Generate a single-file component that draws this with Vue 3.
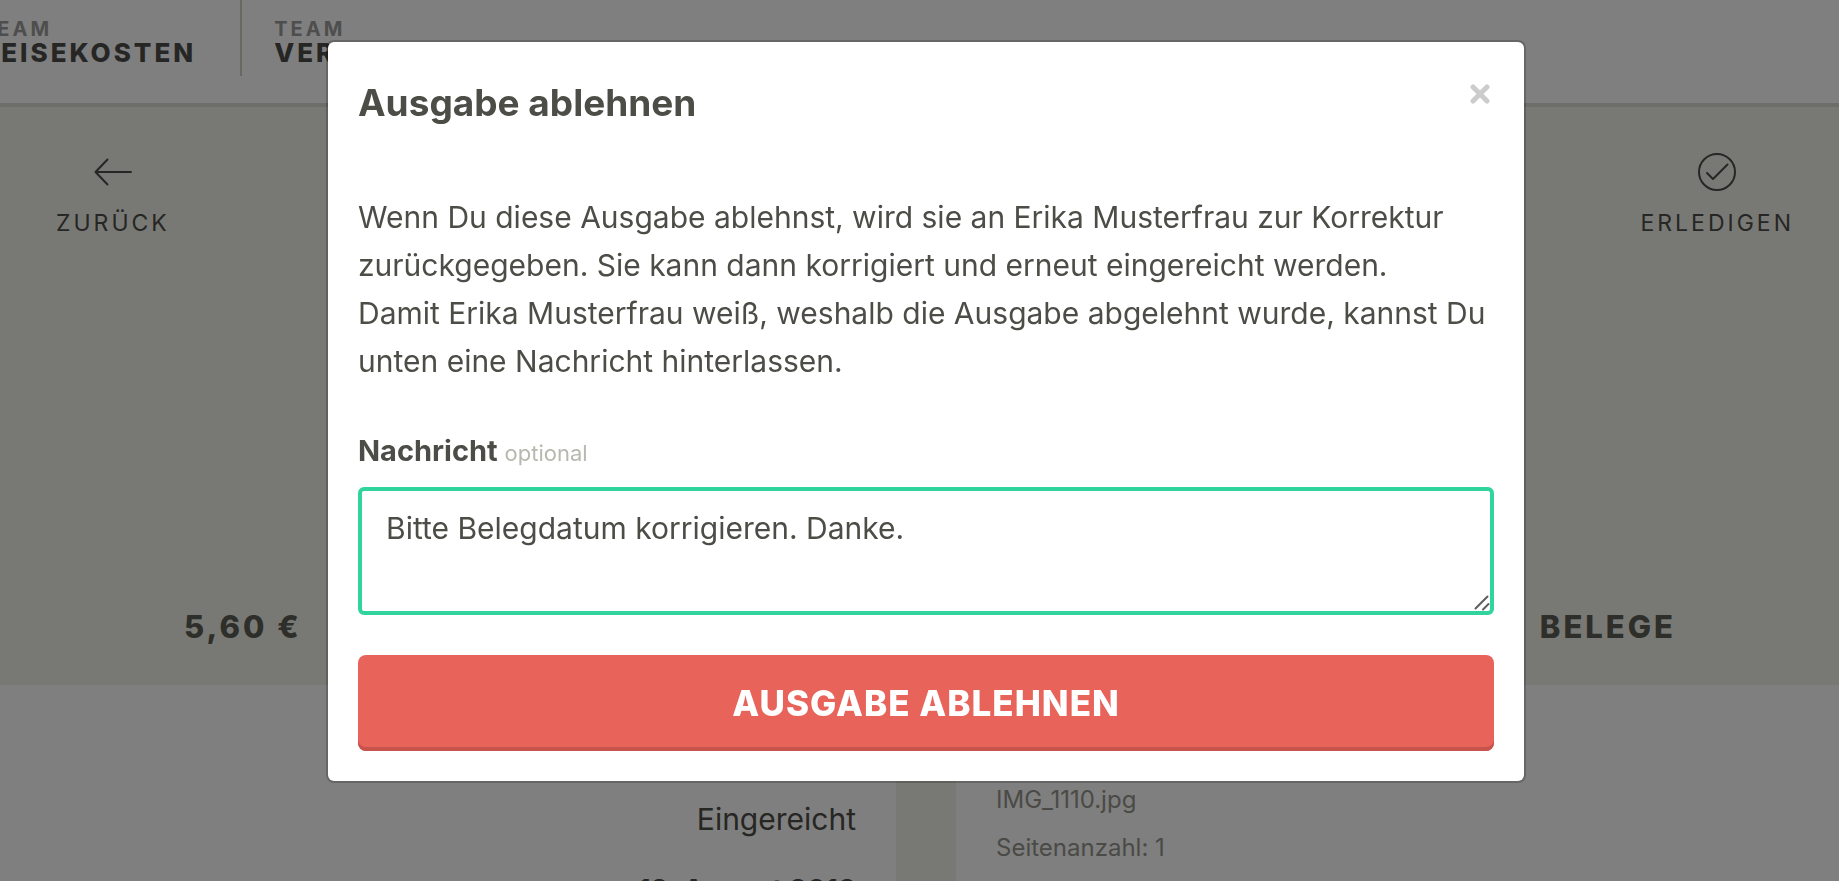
<script setup>
import { ref } from 'vue'

const teams = ['Reisekosten', 'Vertrieb']
const message = ref('Bitte Belegdatum korrigieren. Danke.')
</script>

<template>
  <div class="page">
    <nav class="teams">
      <a v-for="team in teams" :key="team" class="team" href="#">
        <span class="team-kind">Team</span>
        <span class="team-name">{{ team }}</span>
      </a>
    </nav>

    <section class="hero">
      <div class="actions">
        <button class="action" type="button">
          <svg width="40" height="40" viewBox="0 0 40 40" aria-hidden="true">
            <path d="M38 20H2.500M14.500 7.500L2.500 20l12 12.500" />
          </svg>
          <span>Zurück</span>
        </button>
        <button class="action" type="button">
          <svg width="40" height="40" viewBox="0 0 40 40" aria-hidden="true">
            <circle cx="20" cy="20" r="18" />
            <path d="M10 21l6 6L30.500 12.500" />
          </svg>
          <span>Erledigen</span>
        </button>
      </div>
      <div class="summary">
        <span class="amount">5,60 €</span>
        <span class="receipts">Belege</span>
      </div>
    </section>

    <div class="columns">
      <section class="status">
        <p class="state">Eingereicht</p>
        <p class="date">12. August 2013</p>
      </section>
      <section class="files">
        <p>IMG_1110.jpg</p>
        <p>Seitenanzahl: 1</p>
      </section>
    </div>
  </div>

  <div class="backdrop">
    <form class="dialog" role="dialog" aria-labelledby="dialog-title" @submit.prevent>
      <header class="dialog-head">
        <h1 id="dialog-title">Ausgabe ablehnen</h1>
        <button class="close" type="button" aria-label="Schließen">
          <svg width="20" height="20" viewBox="0 0 20 20" aria-hidden="true">
            <path d="M3 3l14 14M17 3L3 17" />
          </svg>
        </button>
      </header>
      <p class="copy">
        Wenn Du diese Ausgabe ablehnst, wird sie an Erika Musterfrau zur Korrektur
        zurückgegeben. Sie kann dann korrigiert und erneut eingereicht werden.<br />
        Damit Erika Musterfrau weiß, weshalb die Ausgabe abgelehnt wurde, kannst Du
        unten eine Nachricht hinterlassen.
      </p>
      <label class="label" for="message">Nachricht <small>optional</small></label>
      <div class="field">
        <textarea id="message" v-model="message" spellcheck="false"></textarea>
        <svg class="grip" width="16" height="16" viewBox="0 0 16 16" aria-hidden="true">
          <path d="M1.500 13.500l12-12M9 14.500l5.500-5.500" />
        </svg>
      </div>
      <button class="submit" type="submit">Ausgabe ablehnen</button>
    </form>
  </div>
</template>

<style>
body {
  margin: 0;
  overflow: hidden;
  font-family: Inter, Lato, sans-serif;
  color: #4d4d47;
}
</style>

<style scoped>
p,
h1 {
  margin: 0;
}

button {
  border: 0;
  background: none;
  color: inherit;
  font-family: inherit;
}

svg {
  display: block;
  fill: none;
  stroke: currentColor;
  stroke-width: 2;
  stroke-linecap: round;
  stroke-linejoin: round;
}

.page {
  display: flex;
  flex-direction: column;
  height: 100vh;
  overflow: hidden;
  background: #f1f2e8;
}

.teams {
  display: flex;
  flex: none;
  height: 103px;
  margin-left: -51px;
  border-bottom: 4px solid #dadad2;
  background: #fff;
}

.team {
  display: flex;
  flex-direction: column;
  box-sizing: border-box;
  height: 76px;
  padding: 17px 44px 0 32px;
  color: #4d4d4b;
  text-transform: uppercase;
  text-decoration: none;
}

.team + .team {
  border-left: 2px solid #d0d0c6;
}

.team-kind {
  color: #9c9c9a;
  font-size: 20px;
  font-weight: 700;
  line-height: 24px;
  letter-spacing: 3px;
}

.team-name {
  font-size: 26px;
  font-weight: 800;
  line-height: 24px;
  letter-spacing: 3px;
}

.hero {
  display: flex;
  flex: none;
  flex-direction: column;
  justify-content: space-between;
  box-sizing: border-box;
  height: 578px;
  padding: 45px 45px 40px 56px;
}

.actions,
.summary {
  display: flex;
  justify-content: space-between;
}

.action {
  display: flex;
  flex-direction: column;
  align-items: center;
  gap: 16px;
  padding: 0;
  color: #4d4d4b;
  font-size: 23px;
  line-height: 30px;
  letter-spacing: 3px;
  text-transform: uppercase;
}

.summary {
  padding: 0 118px 0 128px;
  color: #5c5c54;
  font-size: 31px;
  font-weight: 800;
  line-height: 36px;
  letter-spacing: 3px;
  text-transform: uppercase;
}

.columns {
  display: grid;
  flex: 1;
  grid-template-columns: 896px 1fr;
  gap: 60px;
  min-height: 0;
}

.status,
.files {
  padding: 91px 40px 0;
  background: #fff;
  line-height: 48px;
}

.status {
  padding-top: 110px;
  text-align: right;
}

.state {
  font-size: 30px;
}

.date {
  padding-top: 23px;
  font-size: 28px;
  font-weight: 700;
}

.files {
  color: #94948c;
  font-size: 24px;
}

.backdrop {
  position: fixed;
  inset: 0;
  display: flex;
  align-items: flex-start;
  justify-content: center;
  padding: 40px 0 0 13px;
  background: rgba(0, 0, 0, 0.5);
}

.dialog {
  box-sizing: border-box;
  width: 1200px;
  padding: 30px;
  border: 2px solid rgba(0, 0, 0, 0.2);
  border-radius: 8px;
  background: #fff;
  background-clip: padding-box;
}

.dialog-head {
  display: flex;
  align-items: flex-start;
  justify-content: space-between;
  padding-bottom: 66px;
}

h1 {
  padding-top: 7px;
  font-size: 37px;
  font-weight: 700;
  line-height: 48px;
}

.close {
  padding: 12px 4px;
  color: #ccc;
}

.close svg {
  stroke-width: 5;
}

.copy {
  padding-bottom: 42px;
  font-size: 30px;
  line-height: 48px;
}

.label {
  display: block;
  padding-bottom: 10px;
  font-size: 29px;
  font-weight: 700;
  line-height: 48px;
}

.label small {
  color: #b8b8ae;
  font-size: 22px;
  font-weight: 400;
}

.field {
  position: relative;
  padding-bottom: 40px;
}

textarea {
  display: block;
  box-sizing: border-box;
  width: 100%;
  height: 128px;
  padding: 13px 24px;
  border: 4px solid #32d49d;
  border-radius: 6px;
  outline: 0;
  background: #fff;
  color: inherit;
  font-family: inherit;
  font-size: 30px;
  line-height: 48px;
  resize: none;
}

.grip {
  position: absolute;
  right: 4px;
  bottom: 44px;
  color: #5e5e5e;
}

.submit {
  display: block;
  width: 100%;
  height: 96px;
  padding: 0;
  border-radius: 8px;
  background: #e8635a;
  box-shadow: inset 0 -4px #c6544d;
  color: #fff;
  font-size: 35px;
  font-weight: 800;
  letter-spacing: 1px;
  text-transform: uppercase;
}
</style>
